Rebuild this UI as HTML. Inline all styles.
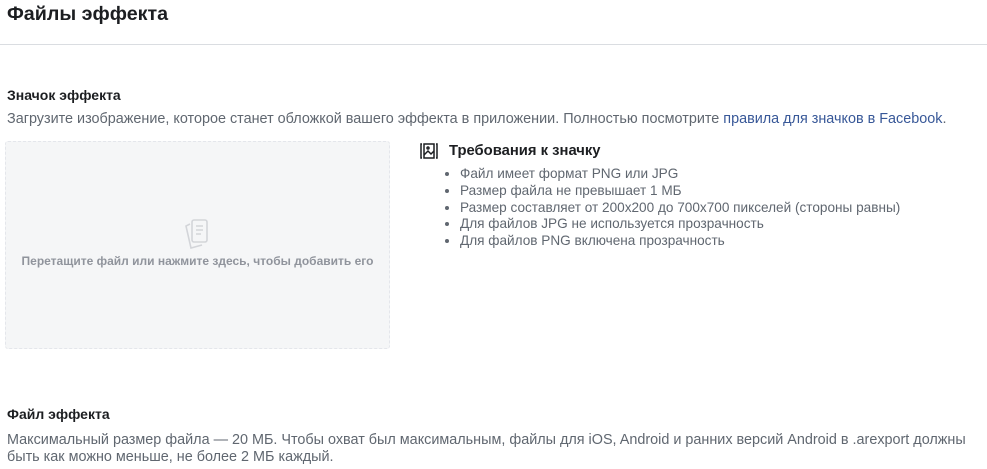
<!DOCTYPE html><html><head><meta charset="utf-8"><style>
body{margin:0;width:987px;height:469px;background:#fff;font-family:"Liberation Sans",sans-serif;position:relative;overflow:hidden}
.a{position:absolute;white-space:nowrap}
h1{position:absolute;left:7px;top:3px;margin:0;font-size:19.7px;color:#1c1e21;font-weight:bold}
.hr{position:absolute;left:0;right:0;top:44px;height:1px;background:#dadde1}
.h{font-size:14px;font-weight:bold;color:#1c1e21}
.d{font-size:14.4px;color:#606770}
.box{position:absolute;left:5px;top:141px;width:383px;height:206px;background:#f5f6f7;border:1px dashed #e4e6eb;border-radius:3px}
ul{position:absolute;left:447px;top:166px;margin:0;padding-left:13px;font-size:13.6px;color:#606770;line-height:16.8px}
</style></head><body>
<h1>Файлы эффекта</h1><div class="hr"></div>
<div class="a h" style="left:7px;top:87px">Значок эффекта</div>
<div class="a d" style="left:7px;top:111px">Загрузите изображение, которое станет обложкой вашего эффекта в приложении. Полностью посмотрите <span style="color:#385898">правила для значков в Facebook</span>.</div>
<div class="box">
<svg style="position:absolute;left:176px;top:75px" width="34" height="34" viewBox="0 0 34 34" fill="none" stroke="#d3d5d9" stroke-width="1.6"><path d="M8 7 L4 9 L9 31 L20 28"/><rect x="10" y="3" width="15" height="22" rx="2"/><path d="M14 9h7M14 13h7M14 17h5"/></svg>
<div class="a" style="left:0;width:383px;text-align:center;top:112px;font-size:12px;font-weight:bold;color:#90949c">Перетащите файл или нажмите здесь, чтобы добавить его</div>
</div>
<svg class="a" style="left:419px;top:142px" width="20" height="18" viewBox="0 0 20 18" fill="none" stroke="#1c1e21" stroke-width="1.5"><path d="M3 2h-1v14h1M17 2h1v14h-1"/><rect x="5" y="2" width="10" height="14"/><path d="M5 13l4-4 3 3 3-3"/><circle cx="9" cy="6" r="1"/></svg>
<div class="a h" style="left:449px;top:143px;font-size:14.8px">Требования к значку</div>
<ul><li>Файл имеет формат PNG или JPG</li><li>Размер файла не превышает 1 МБ</li><li>Размер составляет от 200x200 до 700x700 пикселей (стороны равны)</li><li>Для файлов JPG не используется прозрачность</li><li>Для файлов PNG включена прозрачность</li></ul>
<div class="a h" style="left:7px;top:406px">Файл эффекта</div>
<div class="a d" style="left:7px;top:432px;line-height:17px;font-size:14.4px">Максимальный размер файла — 20 МБ. Чтобы охват был максимальным, файлы для iOS, Android и ранних версий Android в .arexport должны<br>быть как можно меньше, не более 2 МБ каждый.</div>
</body></html>
